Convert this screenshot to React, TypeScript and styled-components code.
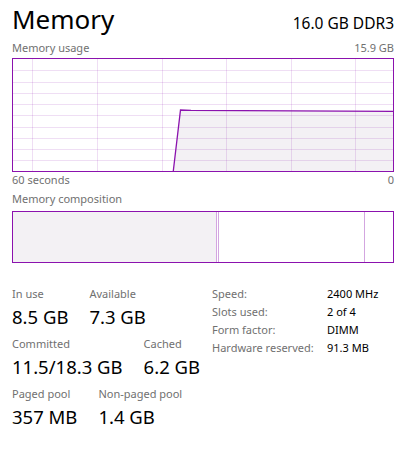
import { Fragment } from "react";
import styled, { createGlobalStyle } from "styled-components";

const PURPLE = "#8b12ae";
const SOFT = "#d3a6e0";
const FILL = "#f3f1f4";

const GlobalStyle = createGlobalStyle`
  html, body {
    margin: 0;
    padding: 0;
    background: #ffffff;
  }
  body {
    font-family: "Noto Sans", "Open Sans", sans-serif;
    color: #000000;
  }
`;

const Page = styled.div`
  width: 413px;
  box-sizing: border-box;
  padding: 1px 19px 0 12px;
  display: flex;
  flex-direction: column;
`;

const Header = styled.div`
  display: flex;
  justify-content: space-between;
  align-items: baseline;
`;

const Title = styled.h1`
  margin: 0;
  font-size: 26px;
  line-height: 36px;
  font-weight: 400;
`;

const Spec = styled.div`
  font-size: 15.5px;
  line-height: 20px;
`;

const LabelRow = styled.div<{ $top: number }>`
  display: flex;
  justify-content: space-between;
  margin-top: ${p => p.$top}px;
  font-size: 11px;
  line-height: 14px;
  color: #707070;
`;

const ChartBox = styled.div`
  margin-top: 3px;
  height: 112px;
  border: 1px solid ${PURPLE};
  display: flex;
`;

const Composition = styled.div`
  margin-top: 5px;
  height: 50px;
  border: 1px solid ${PURPLE};
  display: flex;
`;

const Segment = styled.div<{ $width?: number; $filled?: boolean; $divider?: boolean }>`
  box-sizing: border-box;
  width: ${p => (p.$width ? `${p.$width}px` : "auto")};
  flex: ${p => (p.$width ? "none" : "1")};
  background: ${p => (p.$filled ? FILL : "#ffffff")};
  border-right: ${p => (p.$divider ? `1px solid ${SOFT}` : "none")};
`;

const Stats = styled.div`
  margin-top: 24px;
  display: flex;
`;

const LeftStats = styled.div`
  width: 200px;
  display: flex;
  flex-direction: column;
  gap: 8px;
`;

const StatRow = styled.div`
  display: flex;
  gap: 21px;
`;

const Stat = styled.div`
  display: flex;
  flex-direction: column;
  gap: 4px;
`;

const StatLabel = styled.div`
  font-size: 11px;
  line-height: 14px;
  color: #707070;
`;

const StatValue = styled.div`
  font-size: 18.5px;
  line-height: 24px;
`;

const Details = styled.div`
  display: grid;
  grid-template-columns: 115px auto;
  row-gap: 4px;
  align-content: start;
  font-size: 11px;
  line-height: 14px;
`;

const DetailLabel = styled.div`
  color: #707070;
`;

const DetailValue = styled.div`
  color: #000000;
`;

const W = 380;
const H = 112;
const vLines = [19, 84, 149, 213, 278, 342];
const hLines = Array.from({ length: 9 }, (_, i) => Math.round((i + 1) * 11.27));
const points = "160.3,112 167.5,51 178,51.3 380,52.3";

const UsageChart = () => (
  <svg width={W} height={H} viewBox={`0 0 ${W} ${H}`} style={{ display: "block" }}>
    <polygon points={`${points} 380,112`} fill={FILL} />
    {vLines.map(x => (
      <line key={`v${x}`} x1={x + 0.5} y1={0} x2={x + 0.5} y2={H} stroke="rgba(139,18,174,0.14)" strokeWidth={1} />
    ))}
    {hLines.map(y => (
      <line key={`h${y}`} x1={0} y1={y + 0.5} x2={W} y2={y + 0.5} stroke="rgba(139,18,174,0.14)" strokeWidth={1} />
    ))}
    <polyline points={points} fill="none" stroke={PURPLE} strokeWidth={1.3} />
  </svg>
);

const details: [string, string][] = [
  ["Speed:", "2400 MHz"],
  ["Slots used:", "2 of 4"],
  ["Form factor:", "DIMM"],
  ["Hardware reserved:", "91.3 MB"],
];

const stats: [string, string][][] = [
  [["In use", "8.5 GB"], ["Available", "7.3 GB"]],
  [["Committed", "11.5/18.3 GB"], ["Cached", "6.2 GB"]],
  [["Paged pool", "357 MB"], ["Non-paged pool", "1.4 GB"]],
];

export default function App() {
  return (
    <>
      <GlobalStyle />
      <Page>
        <Header>
          <Title>Memory</Title>
          <Spec>16.0 GB DDR3</Spec>
        </Header>

        <LabelRow $top={4}>
          <span>Memory usage</span>
          <span>15.9 GB</span>
        </LabelRow>
        <ChartBox>
          <UsageChart />
        </ChartBox>
        <LabelRow $top={1}>
          <span>60 seconds</span>
          <span>0</span>
        </LabelRow>

        <LabelRow $top={5}>
          <span>Memory composition</span>
        </LabelRow>
        <Composition>
          <Segment $width={204} $filled $divider />
          <Segment $width={2} $divider />
          <Segment $width={146} $divider />
          <Segment />
        </Composition>

        <Stats>
          <LeftStats>
            {stats.map((row, i) => (
              <StatRow key={i}>
                {row.map(([label, value]) => (
                  <Stat key={label}>
                    <StatLabel>{label}</StatLabel>
                    <StatValue>{value}</StatValue>
                  </Stat>
                ))}
              </StatRow>
            ))}
          </LeftStats>
          <Details>
            {details.map(([label, value]) => (
              <Fragment key={label}>
                <DetailLabel>{label}</DetailLabel>
                <DetailValue>{value}</DetailValue>
              </Fragment>
            ))}
          </Details>
        </Stats>
      </Page>
    </>
  );
}
